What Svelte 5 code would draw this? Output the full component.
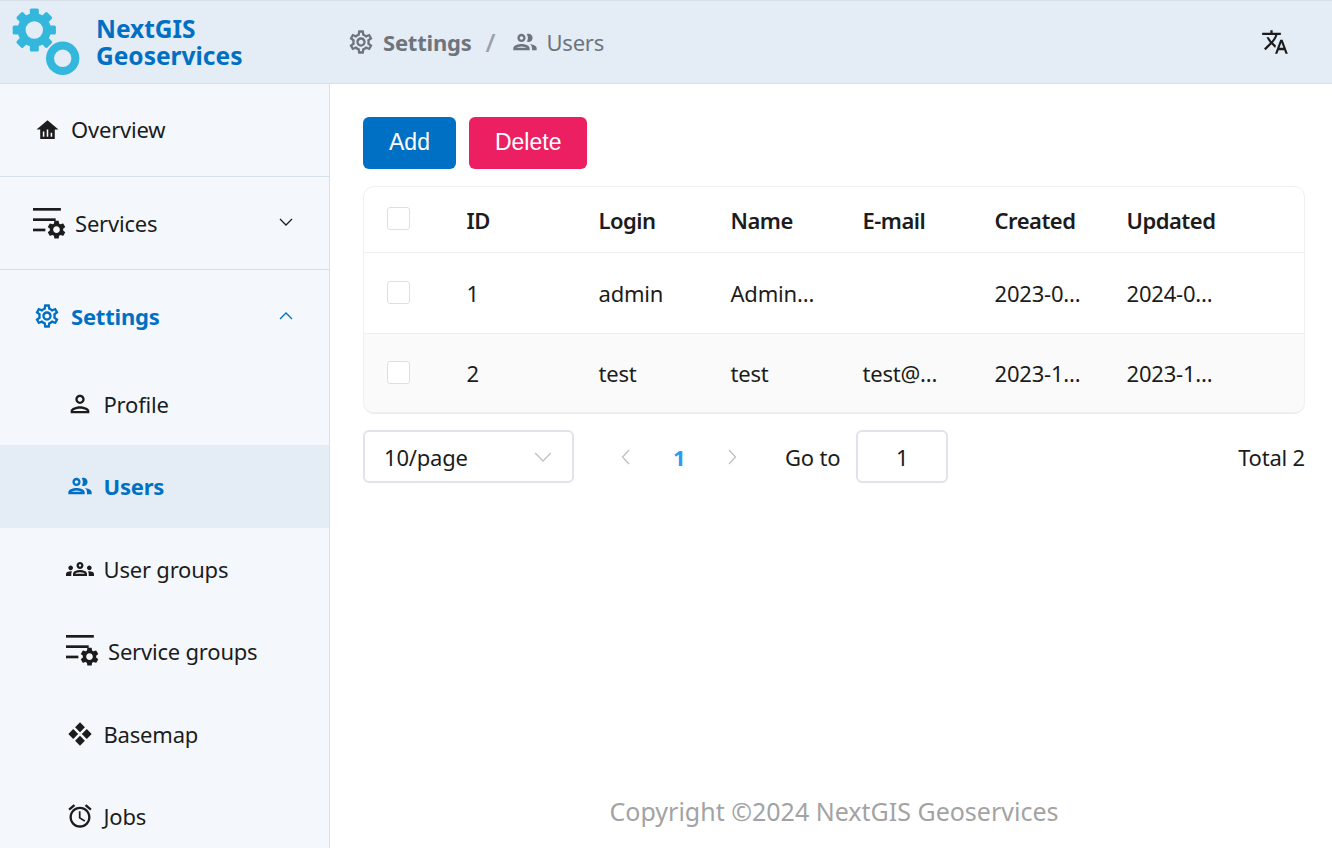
<script>
	const gear = 'M19.14 12.94c.04-.3.06-.61.06-.94 0-.32-.02-.64-.07-.94l2.03-1.58c.18-.14.23-.41.12-.61l-1.92-3.32c-.12-.22-.37-.29-.59-.22l-2.39.96c-.5-.38-1.03-.7-1.62-.94l-.36-2.54c-.04-.24-.24-.41-.48-.41h-3.84c-.24 0-.43.17-.47.41l-.36 2.54c-.59.24-1.13.57-1.62.94l-2.39-.96c-.22-.08-.47 0-.59.22L2.74 8.87c-.12.21-.08.47.12.61l2.03 1.58c-.05.3-.09.63-.09.94s.02.64.07.94l-2.03 1.58c-.18.14-.23.41-.12.61l1.92 3.32c.12.22.37.29.59.22l2.39-.96c.5.38 1.03.7 1.62.94l.36 2.54c.05.24.24.41.48.41h3.84c.24 0 .44-.17.47-.41l.36-2.54c.59-.24 1.13-.56 1.62-.94l2.39.96c.22.08.47 0 .59-.22l1.92-3.32c.12-.22.07-.47-.12-.61l-2.01-1.58zM12 15.6c-1.98 0-3.6-1.62-3.6-3.6s1.62-3.6 3.6-3.6 3.6 1.62 3.6 3.6-1.62 3.6-3.6 3.6z';
	const gearLine = 'M19.43 12.98c.04-.32.07-.64.07-.98 0-.34-.03-.66-.07-.98l2.11-1.65c.19-.15.24-.42.12-.64l-2-3.46c-.09-.16-.26-.25-.44-.25-.06 0-.12.01-.17.03l-2.49 1c-.52-.4-1.08-.73-1.69-.98l-.38-2.65C14.46 2.18 14.25 2 14 2h-4c-.25 0-.46.18-.49.42l-.38 2.65c-.61.25-1.17.59-1.69.98l-2.49-1c-.06-.02-.12-.03-.18-.03-.17 0-.34.09-.43.25l-2 3.46c-.13.22-.07.49.12.64l2.11 1.65c-.04.32-.07.65-.07.98 0 .33.03.66.07.98l-2.11 1.65c-.19.15-.24.42-.12.64l2 3.46c.09.16.26.25.44.25.06 0 .12-.01.17-.03l2.49-1c.52.4 1.08.73 1.69.98l.38 2.65c.03.24.24.42.49.42h4c.25 0 .46-.18.49-.42l.38-2.65c.61-.25 1.17-.59 1.69-.98l2.49 1c.06.02.12.03.18.03.17 0 .34-.09.43-.25l2-3.46c.12-.22.07-.49-.12-.64l-2.11-1.65zm-1.98-1.71c.04.31.05.52.05.73 0 .21-.02.43-.05.73l-.14 1.13.89.7 1.08.84-.7 1.21-1.27-.51-1.04-.42-.9.68c-.43.32-.84.56-1.25.73l-1.06.43-.16 1.13-.2 1.35h-1.4l-.19-1.35-.16-1.13-1.06-.43c-.43-.18-.83-.41-1.23-.71l-.91-.7-1.06.43-1.27.51-.7-1.21 1.08-.84.89-.7-.14-1.13c-.03-.31-.05-.54-.05-.74s.02-.43.05-.73l.14-1.13-.89-.7-1.08-.84.7-1.21 1.27.51 1.04.42.9-.68c.43-.32.84-.56 1.25-.73l1.06-.43.16-1.13.2-1.35h1.39l.19 1.35.16 1.13 1.06.43c.43.18.83.41 1.23.71l.91.7 1.06-.43 1.27-.51.7 1.21-1.07.85-.89.7.14 1.13zM12 8c-2.21 0-4 1.79-4 4s1.79 4 4 4 4-1.79 4-4-1.79-4-4-4zm0 6c-1.1 0-2-.9-2-2s.9-2 2-2 2 .9 2 2-.9 2-2 2z';
	const people = 'M9 13.75c-2.34 0-7 1.17-7 3.5V19h14v-1.75c0-2.33-4.66-3.5-7-3.5zM4.34 17c.84-.58 2.87-1.25 4.66-1.25s3.82.67 4.66 1.25H4.34zM9 12c1.93 0 3.5-1.57 3.5-3.5S10.93 5 9 5 5.5 6.57 5.5 8.5 7.07 12 9 12zm0-5c.83 0 1.5.67 1.5 1.5S9.83 10 9 10s-1.5-.67-1.5-1.5S8.17 7 9 7zm7.04 6.81c1.16.84 1.96 1.96 1.96 3.44V19h4v-1.75c0-2.02-3.5-3.17-5.96-3.44zM15 12c1.93 0 3.5-1.57 3.5-3.5S16.93 5 15 5c-.54 0-1.04.13-1.5.35.63.89 1 1.98 1 3.15s-.37 2.26-1 3.15c.46.22.96.35 1.5.35z';
	const person = 'M12 6c1.1 0 2 .9 2 2s-.9 2-2 2-2-.9-2-2 .9-2 2-2m0 10c2.7 0 5.8 1.29 6 2H6c.23-.72 3.31-2 6-2m0-12C9.79 4 8 5.79 8 8s1.79 4 4 4 4-1.79 4-4-1.79-4-4-4zm0 10c-2.67 0-8 1.34-8 4v2h16v-2c0-2.66-5.33-4-8-4z';
	const groups = 'M4 13c1.1 0 2-.9 2-2 0-1.1-.9-2-2-2s-2 .9-2 2c0 1.1.9 2 2 2zm1.13 1.1c-.37-.06-.74-.1-1.13-.1-.99 0-1.93.21-2.78.58C.48 14.9 0 15.62 0 16.43V18h4.5v-1.61c0-.83.23-1.61.63-2.29zM20 13c1.1 0 2-.9 2-2 0-1.1-.9-2-2-2s-2 .9-2 2c0 1.1.9 2 2 2zm4 3.43c0-.81-.48-1.53-1.22-1.85-.85-.37-1.79-.58-2.78-.58-.39 0-.76.04-1.13.1.4.68.63 1.46.63 2.29V18H24v-1.57zm-7.76-2.78C15.07 13.13 13.63 12.75 12 12.75c-1.63 0-3.07.39-4.24.9C6.68 14.13 6 15.21 6 16.39V18h12v-1.61c0-1.18-.68-2.26-1.76-2.74zM8.07 16c.09-.23.13-.39.91-.69.97-.38 1.99-.56 3.02-.56s2.05.18 3.02.56c.77.3.81.46.91.69H8.07zM12 8c.55 0 1 .45 1 1s-.45 1-1 1-1-.45-1-1 .45-1 1-1m0-2c-1.66 0-3 1.34-3 3s1.34 3 3 3 3-1.34 3-3-1.34-3-3-3z';
	const alarm = 'M22 5.72l-4.6-3.86-1.29 1.53 4.6 3.86L22 5.72zM7.88 3.39L6.6 1.86 2 5.71l1.29 1.53 4.59-3.85zM12.5 8H11v6l4.75 2.85.75-1.23-4-2.37V8zM12 4c-4.97 0-9 4.03-9 9s4.03 9 9 9 9-4.03 9-9-4.03-9-9-9zm0 16c-3.87 0-7-3.13-7-7s3.13-7 7-7 7 3.13 7 7-3.13 7-7 7z';
	const translate = 'M12.87 15.07l-2.54-2.51.03-.03c1.74-1.94 2.98-4.17 3.71-6.53H17V4h-7V2H8v2H1v1.99h11.17C11.5 7.92 10.44 9.75 9 11.35 8.07 10.32 7.3 9.19 6.69 8h-2c.73 1.63 1.73 3.17 2.98 4.56l-5.09 5.02L4 19l5-5 3.11 3.11.76-2.04zM18.5 10h-2L12 22h2l1.12-3h4.75L21 22h2l-4.5-12zm-2.62 7l1.62-4.33L19.12 17h-3.24z';
	const home = 'M12 3 1.5 12H5v9h14v-9h3.5L12 3zM9 19H7.5v-5H9v5zm3.75 0h-1.5v-7h1.500v7zm3.75 0H15v-4h1.500v4z';
	const diamonds = 'M12 2l4.2 4.2L12 10.4 7.800 6.200zM6.200 7.800l4.200 4.200-4.200 4.200L2 12zM17.800 7.800 22 12l-4.200 4.200-4.200-4.200zM12 13.600l4.200 4.200L12 22l-4.200-4.200z';

	const teeth = [0, 45, 90, 135, 180, 225, 270, 315];
	const rows = [
		{ id: 1, login: 'admin', name: 'Administrator', email: '', created: '2023-03-14 10:22', updated: '2024-01-18 09:41' },
		{ id: 2, login: 'test', name: 'test', email: 'test@mail.example', created: '2023-11-02 16:05', updated: '2023-11-02 16:05' }
	];
	const subItems = [
		{ label: 'Profile', icon: person },
		{ label: 'Users', icon: people, active: true },
		{ label: 'User groups', icon: groups },
		{ label: 'Service groups', wide: true },
		{ label: 'Basemap', icon: diamonds },
		{ label: 'Jobs', icon: alarm }
	];
</script>

{#snippet servicesIcon()}
	<svg class="svc-icon" viewBox="0 0 32 32" aria-hidden="true">
		<rect x="0" y="0" width="27" height="2.600" />
		<rect x="0" y="10" width="22" height="2.600" />
		<rect x="0" y="20" width="12" height="2.600" />
		<path transform="translate(12 10.200) scale(0.9)" d={gear} />
	</svg>
{/snippet}

<div class="page">
	<header class="topbar">
		<div class="brand">
			<svg class="logo" viewBox="0 0 68 68" aria-hidden="true">
				{#each teeth as deg}
					<rect x="17.800" y="0.400" width="9" height="10" rx="1.500" transform="rotate({deg} 22.300 22)" />
				{/each}
				<circle class="gear-ring" cx="22.300" cy="22" r="12.700" />
				<path fill-rule="evenodd" d="M50.700 33.600a16.700 16.700 0 1 0 0 33.400 16.700 16.700 0 1 0 0-33.400zm0 8a8.700 8.700 0 1 1 0 17.400 8.700 8.700 0 1 1 0-17.400z" />
			</svg>
			<span class="brand-name">NextGIS<br />Geoservices</span>
		</div>
		<nav class="crumbs">
			<svg viewBox="0 0 24 24" aria-hidden="true"><path d={gearLine} /></svg>
			<strong>Settings</strong>
			<span class="slash">/</span>
			<svg viewBox="0 0 24 24" aria-hidden="true"><path d={people} /></svg>
			<span class="leaf">Users</span>
		</nav>
		<svg class="lang" viewBox="0 0 24 24" aria-hidden="true"><path d={translate} /></svg>
	</header>

	<div class="body">
		<aside class="sidebar">
			<a class="item top overview">
				<svg viewBox="0 0 24 24" aria-hidden="true"><path d={home} /></svg>
				<span>Overview</span>
			</a>
			<a class="item top services">
				{@render servicesIcon()}
				<span>Services</span>
				<svg class="chev" viewBox="0 0 16 16" aria-hidden="true"><path d="M2 5l6 6 6-6" /></svg>
			</a>
			<a class="item top open">
				<svg viewBox="0 0 24 24" aria-hidden="true"><path d={gearLine} /></svg>
				<span>Settings</span>
				<svg class="chev" viewBox="0 0 16 16" aria-hidden="true"><path d="M2 11l6-6 6 6" /></svg>
			</a>
			{#each subItems as sub}
				<a class="item sub" class:active={sub.active} class:wide={sub.wide}>
					{#if sub.wide}
						{@render servicesIcon()}
					{:else}
						<svg viewBox="0 0 24 24" aria-hidden="true"><path d={sub.icon} /></svg>
					{/if}
					<span>{sub.label}</span>
				</a>
			{/each}
		</aside>

		<main class="content">
			<div class="actions">
				<button class="btn add">Add</button>
				<button class="btn del">Delete</button>
			</div>

			<div class="table-wrap">
				<table>
					<colgroup>
						<col class="c-check" />
						<col class="c-data" /><col class="c-data" /><col class="c-data" />
						<col class="c-data" /><col class="c-data" /><col class="c-data" />
						<col />
					</colgroup>
					<thead>
						<tr>
							<th><span class="check"></span></th>
							<th>ID</th>
							<th>Login</th>
							<th>Name</th>
							<th>E-mail</th>
							<th>Created</th>
							<th>Updated</th>
							<th></th>
						</tr>
					</thead>
					<tbody>
						{#each rows as row}
							<tr>
								<td><span class="check"></span></td>
								<td>{row.id}</td>
								<td>{row.login}</td>
								<td>{row.name}</td>
								<td>{row.email}</td>
								<td>{row.created}</td>
								<td>{row.updated}</td>
								<td></td>
							</tr>
						{/each}
					</tbody>
				</table>
			</div>

			<div class="pager">
				<div class="select">
					<span>10/page</span>
					<svg viewBox="0 0 16 16" aria-hidden="true"><path d="M1 4.500l7 7 7-7" /></svg>
				</div>
				<svg class="arrow" viewBox="0 0 12 16" aria-hidden="true"><path d="M9 1 2.500 8 9 15" /></svg>
				<span class="current">1</span>
				<svg class="arrow" viewBox="0 0 12 16" aria-hidden="true"><path d="M3 1l6.500 7L3 15" /></svg>
				<span class="goto">Go to</span>
				<div class="page-input">1</div>
				<span class="total">Total 2</span>
			</div>

			<footer>Copyright ©2024 NextGIS Geoservices</footer>
		</main>
	</div>
</div>

<style>
	:global(body) { margin: 0; background: #fff; overflow: hidden; }

	.page {
		height: 848px; display: flex; flex-direction: column; overflow: hidden;
		font-family: "Noto Sans", "Open Sans", sans-serif; font-size: 22px; letter-spacing: -0.2px; color: #1c1c1c;
	}

	.topbar {
		flex: none; height: 84px; box-sizing: border-box; display: flex; align-items: center;
		background: #e4ecf6; border-top: 1px solid #d9dfe7; border-bottom: 1px solid #d6e1ec;
	}
	.brand { width: 347px; flex: none; display: flex; align-items: center; }
	.logo { width: 68px; height: 68px; margin-left: 12px; fill: #33b7dd; flex: none; }
	.gear-ring { fill: none; stroke: #33b7dd; stroke-width: 8; }
	.brand-name { margin-left: 16px; font-size: 24.500px; font-weight: 700; letter-spacing: 0; line-height: 27px; color: #0070c4; }

	.crumbs { display: flex; align-items: center; color: #6d747c; flex: 1; }
	.crumbs svg { width: 28px; height: 28px; fill: #6d747c; flex: none; }
	.crumbs strong { margin-left: 8px; }
	.crumbs .slash { margin: 0 16px 0 14px; color: #9aa0a6; font-size: 26px; font-weight: 500; }
	.crumbs .leaf { margin-left: 7px; }
	.lang { width: 28px; height: 28px; margin-right: 43px; fill: #1c1c1c; }

	.body { flex: 1; display: flex; min-height: 0; }

	.sidebar {
		width: 330px; flex: none; box-sizing: border-box; overflow: hidden;
		background: #f4f8fc; border-right: 1px solid #d6e1ec;
	}
	.item { display: flex; align-items: center; box-sizing: border-box; }
	.item svg { flex: none; fill: currentColor; width: 28px; height: 28px; }
	.top { height: 93px; padding-left: 33px; gap: 10px; border-bottom: 1px solid #d6e1ec; position: relative; }
	.overview { padding-left: 34.500px; gap: 11.500px; padding-bottom: 2px; }
	.overview svg { width: 25px; height: 25px; }
	.top.open { height: 92.500px; border-bottom: none; color: #0070c4; font-weight: 700; padding-bottom: 1px; }
	.sub { height: 82.500px; padding-left: 66px; gap: 9.500px; }
	.sub.active { background: #e4ecf6; color: #0070c4; font-weight: 700; }
	.sub.wide { gap: 9px; padding-bottom: 1px; }

	.item .svc-icon { width: 33px; height: 33px; margin-top: 2px; }
	.services { padding-left: 33px; gap: 9px; }
	.item .chev {
		position: absolute; right: 35px; top: 37px; width: 16px; height: 16px;
		fill: none; stroke: currentColor; stroke-width: 1.300;
	}
	.open .chev { top: 38px; }

	.content { flex: 1; min-width: 0; display: flex; flex-direction: column; padding: 33px 27px 0 33px; }

	.actions { display: flex; gap: 13px; }
	.btn {
		height: 52px; border: none; border-radius: 6px; color: #fff; padding: 0 26px 2px; letter-spacing: 0;
		font-family: "Liberation Sans", Arial, sans-serif; font-size: 23px;
	}
	.add { background: #0070c4; }
	.del { background: #ed1f63; }

	.table-wrap {
		margin-top: 17px; border: 1px solid #eeeff1; border-radius: 11px; overflow: hidden;
		box-shadow: 0 1px 0 #e9ebee;
	}
	table { width: 100%; border-collapse: collapse; table-layout: fixed; }
	.c-check { width: 79.500px; }
	.c-data { width: 132px; }
	th, td {
		padding: 0 22px 0 23px; text-align: left; overflow: hidden; white-space: nowrap; text-overflow: ellipsis;
	}
	th { height: 65px; font-weight: 600; letter-spacing: -0.5px; border-bottom: 1px solid #eeeff1; overflow: visible; }
	td { height: 78px; }
	tbody tr:first-child td { border-bottom: 1px solid #eeeff1; height: 80px; }
	tbody tr:nth-child(2) { background: #fafafa; }
	th:first-child, td:first-child { padding: 0 0 0 23px; }
	.check {
		display: block; width: 21px; height: 21px; margin-top: -2px; background: #fff;
		border: 1px solid #dcdfe6; border-radius: 3px;
	}

	.pager { margin-top: 17px; display: flex; align-items: center; }
	.select {
		width: 211px; height: 53px; box-sizing: border-box; display: flex; align-items: center;
		justify-content: space-between; padding: 0 21px 0 19px; border: 2px solid #e0e3ea; border-radius: 6px;
	}
	.select svg { width: 18px; height: 18px; fill: none; stroke: #bfc3cb; stroke-width: 1.300; margin-right: -1px; }
	.arrow { width: 12px; height: 16px; fill: none; stroke: #b9bcc2; stroke-width: 1.200; }
	.select + .arrow { margin-left: 46px; }
	.current { width: 12px; margin: 0 41px; color: #2d9cf0; font-weight: 700; text-align: center; }
	.goto { margin-left: 47px; }
	.page-input {
		width: 92px; height: 53px; margin-left: 16px; box-sizing: border-box; display: flex;
		align-items: center; justify-content: center; border: 2px solid #e0e3ea; border-radius: 6px;
	}
	.total { margin-left: auto; }

	footer {
		margin-top: auto; height: 72px; display: flex; justify-content: center; align-items: center;
		letter-spacing: 0; color: #a3a3a3; font-size: 25px; padding-bottom: 2px; box-sizing: border-box;
	}
</style>
